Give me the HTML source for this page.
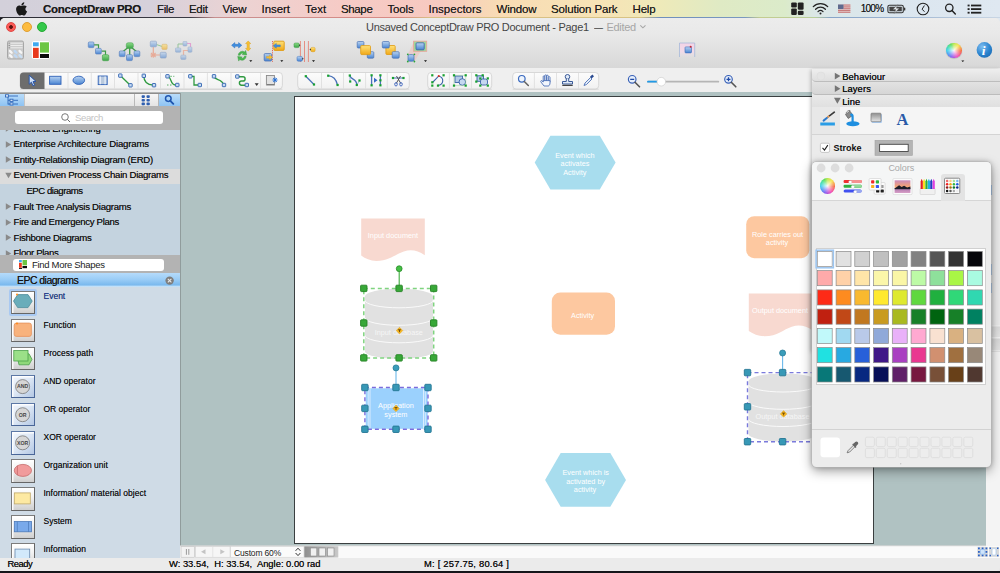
<!DOCTYPE html>
<html>
<head>
<meta charset="utf-8">
<title>ConceptDraw PRO</title>
<style>
*{box-sizing:border-box;margin:0;padding:0}
html,body{width:1000px;height:573px;overflow:hidden;background:#15151a}
body{font-family:"Liberation Sans",sans-serif;position:relative;color:#111}
.abs{position:absolute}
#menubar{position:absolute;left:0;top:0;width:1000px;height:23px;
 background:linear-gradient(90deg,#d3d0da 0,#d6d1db 150px,#ecd3d3 240px,#f6cbc6 340px,#f7c9c0 440px,#f8dcb4 500px,#f7e3b6 600px,#eeeab9 660px,#dfeac4 720px,#dbebca 785px,#dbe7e6 815px,#dbe6ef 900px,#dfe8f1 1000px);}
#mbline{position:absolute;left:0;top:17.300px;width:1000px;height:1.200px;background:linear-gradient(90deg,#2b2b33 0,#3a3a44 190px,#c98f8f 215px,#d98a84 400px,#d9bf86 430px,#d8c384 640px,#6f8fbd 660px,#7a98c0 745px,#c4cc90 760px,#b9cf9a 815px,#86a4c8 830px,#9cb4d0 900px,#c9d6e4 1000px)}
#menubar span{position:absolute;top:1px;font-size:11.5px;line-height:16px;color:#1a1a1a;white-space:nowrap;text-shadow:0 0 .35px rgba(0,0,0,.55)}
#win{position:absolute;left:0;top:18px;width:1000px;height:553px;background:#e6e6e6;border-radius:5px 5px 0 0;overflow:hidden}
#tb1{position:absolute;left:0;top:0;width:1000px;height:51px;background:linear-gradient(#ececec,#e9e9e9 30%,#d7d7d7)}
#tb1line{position:absolute;left:0;top:49.600px;width:1000px;height:.8px;background:#cbcbcb}
#tb2{position:absolute;left:0;top:50.400px;width:1000px;height:24px;background:#efefef}
#tb2line{position:absolute;left:0;top:73.800px;width:1000px;height:.7px;background:#b2b4b4}
.tl{position:absolute;top:4px;width:10px;height:10px;border-radius:50%}
#title{position:absolute;left:0;top:2px;width:1010px;text-align:center;font-size:11.6px;line-height:14px;color:#444;white-space:nowrap}
#title i{font-style:normal;color:#a3a3a3}
.grp{position:absolute;top:54px;height:17px;background:#f7f7f7;border:1px solid #d4d4d4;border-radius:3px;box-shadow:0 .5px 0 #c8c8c8}
.grp b{position:absolute;top:1px;width:1px;height:13px;background:#dedede}
#canvasbg{position:absolute;left:180px;top:74.400px;width:806px;height:453.600px;background:#b0c2c2}
#page{position:absolute;left:294px;top:78px;width:580px;height:448px;background:#fff;border:1px solid #3a3f40}
#left{position:absolute;left:0;top:75px;width:180px;height:465px;background:#d0dde8;overflow:hidden}
#status{position:absolute;left:0;top:540px;width:1000px;height:12.600px;background:#ebebeb;font-size:9.400px;border-radius:0 0 4px 4px}
#status span{position:absolute;top:-.5px;line-height:12px;text-shadow:0 0 .3px #333;white-space:nowrap;color:#111}
#hscroll{position:absolute;left:180px;top:528px;width:820px;height:12px}
</style>
</head>
<body>
<!-- MENUBAR -->
<div id="menubar">
<svg class="abs" style="left:16px;top:2px" width="12" height="14" viewBox="0 0 12 14"><path d="M8.3 0.2c.1.9-.3 1.700-.8 2.300-.5.600-1.300 1.000-2.100.900-.1-.8.300-1.700.800-2.200.5-.6 1.400-1 2.100-1zM10.800 4.700c-.9.500-1.400 1.300-1.400 2.400 0 1.200.7 2.100 1.700 2.500-.3.900-.8 1.800-1.400 2.600-.5.700-1.100 1.300-1.900 1.300-.8 0-1-.5-2-.5s-1.300.5-2 .5c-.8 0-1.400-.7-2-1.500C.6 10.300 0 8.300.1 6.800c.1-1.900 1.500-3.300 3.100-3.300.9 0 1.700.6 2.300.6.600 0 1.500-.7 2.700-.6 1.000.05 1.900.4 2.600 1.200z" fill="#1a1a1a"/></svg>
<span style="left:43px;font-weight:bold;letter-spacing:-.28px">ConceptDraw PRO</span>
<span style="left:157px;letter-spacing:-.37px">File</span>
<span style="left:189px;letter-spacing:-.3px">Edit</span>
<span style="left:222.5px;letter-spacing:-.22px">View</span>
<span style="left:261.5px;letter-spacing:-.06px">Insert</span>
<span style="left:305px;letter-spacing:.07px">Text</span>
<span style="left:341px;letter-spacing:-.37px">Shape</span>
<span style="left:387.5px;letter-spacing:-.16px">Tools</span>
<span style="left:428.5px">Inspectors</span>
<span style="left:496.5px;letter-spacing:-.18px">Window</span>
<span style="left:551px;letter-spacing:-.15px">Solution Park</span>
<span style="left:632.5px;letter-spacing:-.17px">Help</span>
<span style="left:860.700px;font-size:10px;letter-spacing:-.72px">100%</span>
<svg class="abs" style="left:780px;top:0" width="220" height="18" viewBox="780 0 220 18">
 <g fill="#222"><rect x="791.2" y="2.4" width="5.6" height="5" rx="1.2"/><rect x="797.8" y="2.4" width="5.8" height="7.4" rx="1.2"/><rect x="791.2" y="8.4" width="5.6" height="6.6" rx="1.2"/><rect x="797.8" y="10.8" width="5.8" height="4.2" rx="1.2"/></g>
 <g fill="none" stroke="#222" stroke-width="1.3" stroke-linecap="round"><path d="M813.3 6.6a10.300 10.300 0 0 1 14.400 0"/><path d="M815.600 9.200a7 7 0 0 1 9.800 0"/><path d="M818 11.600a3.600 3.600 0 0 1 5 0"/></g><circle cx="820.5" cy="13.500" r="1" fill="#222"/>
 <rect x="838" y="4.500" width="12.400" height="8.400" fill="#e3c4c4"/><rect x="838" y="4.500" width="5.600" height="4.600" fill="#5f6b8e"/><g stroke="#c47474" stroke-width=".9"><path d="M843.600 5h6.800M843.600 6.900h6.800M843.600 8.700h6.800M838 10.500h12.400M838 12.300h12.400"/></g>
 <rect x="887.900" y="5.200" width="15.400" height="7.600" rx="1.600" fill="none" stroke="#333" stroke-width="1.100"/><rect x="904" y="7.500" width="1.300" height="3" rx=".6" fill="#333"/><rect x="889.400" y="6.700" width="12.400" height="4.600" rx=".5" fill="#444"/><path d="M897.600 4.700l-4.800 4.900h2.900l-1.400 3.800 5-5.200h-2.900z" fill="#e9eff3" stroke="#444" stroke-width=".4"/>
 <circle cx="923" cy="9" r="5.800" fill="none" stroke="#222" stroke-width="1.100"/><path d="M924.400 5.500l-2.300 3.700 2.400 2.500" fill="none" stroke="#222" stroke-width="1"/>
 <circle cx="949.300" cy="7.800" r="3.700" fill="none" stroke="#222" stroke-width="1.300"/><path d="M952 10.600l3.300 3.400" stroke="#222" stroke-width="1.500" stroke-linecap="round"/>
 <g fill="#222"><rect x="967.600" y="4.600" width="2" height="1.800"/><rect x="971" y="4.600" width="10.300" height="1.800"/><rect x="967.600" y="8.200" width="2" height="1.800"/><rect x="971" y="8.200" width="10.300" height="1.800"/><rect x="967.600" y="11.800" width="2" height="1.800"/><rect x="971" y="11.800" width="10.300" height="1.800"/></g>
</svg>
</div>
<div id="mbline"></div>
<div class="abs" style="left:0;top:18px;width:5px;height:5px;background:#1a1a20"></div>
<!-- WINDOW -->
<div id="win">
 <div id="tb1"></div><div id="tb1line"></div>
 <div id="tb2"></div><div id="tb2line"></div>
 <div class="tl" style="left:6px;background:radial-gradient(circle,#5a1210 0,#5a1210 1.500px,#fc5b57 2.200px);border:.5px solid #df4744"></div>
 <div class="tl" style="left:22px;background:#fdbc40;border:.5px solid #de9f34"></div>
 <div class="tl" style="left:37px;background:#34c84a;border:.5px solid #27aa35"></div>
 <div class="abs" style="left:366px;top:2px;font-size:11px;line-height:14px;color:#454545;white-space:nowrap;letter-spacing:-.3px">Unsaved ConceptDraw PRO Document - Page1</div>
 <div class="abs" style="left:593.5px;top:2px;font-size:11px;line-height:14px;color:#454545;white-space:nowrap;transform:scaleX(.82);transform-origin:left">—</div>
 <div class="abs" style="left:606.5px;top:2px;font-size:11px;line-height:14px;color:#a6a6a6;white-space:nowrap;letter-spacing:-.3px">Edited</div>
 <svg class="abs" style="left:0;top:0" width="1000" height="75" viewBox="0 18 1000 75">
 <defs>
  <linearGradient id="gb" x1="0" y1="0" x2="0" y2="1"><stop offset="0" stop-color="#b9d3f1"/><stop offset="1" stop-color="#4a85d2"/></linearGradient>
  <linearGradient id="gg" x1="0" y1="0" x2="0" y2="1"><stop offset="0" stop-color="#8fdc8a"/><stop offset="1" stop-color="#3aa545"/></linearGradient>
  <linearGradient id="gy" x1="0" y1="0" x2="0" y2="1"><stop offset="0" stop-color="#ffe27a"/><stop offset="1" stop-color="#f0a818"/></linearGradient>
  <linearGradient id="gbtn" x1="0" y1="0" x2="0" y2="1"><stop offset="0" stop-color="#fbfbfb"/><stop offset="1" stop-color="#efefef"/></linearGradient>
  <radialGradient id="ginfo" cx=".35" cy=".3" r=".8"><stop offset="0" stop-color="#7fbdf0"/><stop offset=".6" stop-color="#2d86d0"/><stop offset="1" stop-color="#1d6cb5"/></radialGradient>
 </defs>
 <path d="M640.300 25.300l2.600 2.500 2.600-2.500" fill="none" stroke="#a6a6a6" stroke-width="1.100"/>
 <!-- row1 icon1 -->
 <rect x="7.500" y="41" width="16" height="18" rx="1.500" fill="#cbcbcb" stroke="#a2a2a2" stroke-width=".9"/>
 <path d="M10.600 43.200h12M10.600 45.500h12M10.600 47.800h12" stroke="#ededed" stroke-width="1"/><path d="M8.600 43.200h1.300M8.600 45.500h1.300M8.600 47.800h1.300" stroke="#8e8e8e" stroke-width="1"/>
 <g><ellipse cx="10.800" cy="51.800" rx="2.500" ry="1.300" transform="rotate(45 10.800 51.800)" fill="#f6f6f6"/><ellipse cx="15.600" cy="51.800" rx="2.500" ry="1.300" transform="rotate(45 15.600 51.800)" fill="#bdd7f3"/><ellipse cx="20.400" cy="51.800" rx="2.500" ry="1.300" transform="rotate(45 20.400 51.800)" fill="#f6f6f6"/><ellipse cx="10.800" cy="56.200" rx="2.500" ry="1.300" transform="rotate(45 10.800 56.200)" fill="#f6f6f6"/><ellipse cx="15.600" cy="56.200" rx="2.500" ry="1.300" transform="rotate(45 15.600 56.200)" fill="#bdd7f3"/><ellipse cx="20.400" cy="56.200" rx="2.500" ry="1.300" transform="rotate(45 20.400 56.200)" fill="#c9dff5"/></g>
 <!-- icon2 -->
 <rect x="31.800" y="41" width="18" height="18" rx="2.500" fill="#fff"/>
 <rect x="33" y="42.300" width="5.700" height="4" fill="#3fa9f0"/><rect x="33" y="47.800" width="5.700" height="10.200" fill="#e8391c"/><rect x="40" y="42.300" width="9" height="10.300" fill="#6cc644"/><rect x="40" y="54" width="9" height="4" fill="#0b0b0b"/>
 <!-- icon3 -->
 <path d="M94 44.800h4.500v4M101.500 51.200h4v4" fill="none" stroke="#3f9a48" stroke-width="1.200"/>
 <rect x="88.300" y="42" width="5.600" height="5.600" rx="1" fill="url(#gb)" stroke="#5b82bd" stroke-width=".7"/>
 <rect x="95.500" y="48.400" width="5.800" height="5.600" rx="1" fill="url(#gb)" stroke="#5b82bd" stroke-width=".7"/>
 <rect x="102.400" y="54.700" width="6.400" height="6" rx="1.300" fill="url(#gg)" stroke="#4aa552" stroke-width=".7"/>
 <!-- icon4 -->
 <path d="M129.700 48v7M128 47.500l-5.500 4.500M131.500 47.500l5.500 4.500" stroke="#3f9a48" stroke-width="1.300" fill="none"/>
 <rect x="126.300" y="42.800" width="7" height="5.600" rx="1.800" fill="url(#gg)" stroke="#4aa552" stroke-width=".6"/>
 <rect x="119.300" y="51" width="5.700" height="5.600" rx="1" fill="url(#gb)" stroke="#5b82bd" stroke-width=".7"/>
 <rect x="126.500" y="54.700" width="5.900" height="5.900" rx="1" fill="url(#gb)" stroke="#5b82bd" stroke-width=".7"/>
 <rect x="134.100" y="51" width="5.700" height="5.600" rx="1" fill="url(#gb)" stroke="#5b82bd" stroke-width=".7"/>
 <!-- icon5 faded -->
 <g opacity=".6">
 <path d="M156.500 44.500l5.500 2" stroke="#5cb860" stroke-width="1"/><path d="M153.300 47v6M155 55h5" stroke="#ee8a6a" stroke-width="1.200"/>
 <path d="M151 53l4.600 4M155.600 53l-4.600 4M153.300 52.200v5.600M150.500 55h5.600" stroke="#ee8a6a" stroke-width="1.100"/>
 <rect x="150.300" y="41.200" width="6.200" height="5.600" rx="1" fill="url(#gb)" stroke="#5b82bd" stroke-width=".7"/>
 <rect x="161.900" y="44.300" width="5.200" height="5.100" rx="1" fill="url(#gy)" stroke="#d9a53a" stroke-width=".7"/>
 <rect x="160.300" y="52.300" width="5.900" height="5.700" rx="1" fill="url(#gb)" stroke="#5b82bd" stroke-width=".7"/>
 </g>
 <!-- icon6 faded -->
 <g opacity=".5">
 <path d="M178 48v-4h5" fill="none" stroke="#4aa552" stroke-width="1"/><path d="M187 43.500h3.500v3.500" fill="none" stroke="#e060c0" stroke-width="1.100"/><path d="M188 50.500h-4.500v4.500" fill="none" stroke="#ee8a6a" stroke-width="1.200"/>
 <rect x="183" y="41.400" width="3.900" height="4.600" rx=".8" fill="url(#gb)" stroke="#5b82bd" stroke-width=".6"/>
 <rect x="175.400" y="48" width="5.400" height="4.200" rx=".8" fill="url(#gb)" stroke="#5b82bd" stroke-width=".6"/>
 <rect x="188" y="47" width="3.900" height="5.200" rx=".8" fill="url(#gb)" stroke="#5b82bd" stroke-width=".6"/>
 <rect x="180.800" y="55.200" width="5.100" height="4.200" rx=".8" fill="url(#gb)" stroke="#5b82bd" stroke-width=".6"/>
 </g>
 <!-- icon7 -->
 <path d="M231.600 45.300l3.200-2.700v1.700h3.800v-1.700l3.200 2.700-3.200 2.700v-1.700h-3.800v1.700z" fill="#3f8ee0" stroke="#2a6fc0" stroke-width=".5"/>
 <path d="M248.200 41l2.600 2.600h-1.500v4.800h1.500l-2.600 2.600-2.600-2.600h1.500v-4.800h-1.500z" fill="#f8c030" stroke="#d9a020" stroke-width=".5"/>
 <path d="M238.200 55.200a4.200 4.200 0 0 1 6.500-3.300l1-1.500 1 4.600-4.500-.4 1.100-1.200a2.300 2.300 0 0 0-3.200 1.800z" fill="#4ab850" stroke="#2f9238" stroke-width=".4"/>
 <path d="M246.200 56.300a4.200 4.200 0 0 1-6.500 3.300l-1 1.500-1-4.600 4.500.4-1.100 1.200a2.300 2.300 0 0 0 3.200-1.800z" fill="#4ab850" stroke="#2f9238" stroke-width=".4"/>
 <path d="M249.300 60.200h3l-1.500 1.700z" fill="#111"/>
 <!-- icon8 -->
 <rect x="273.800" y="41.200" width="10.400" height="9.200" rx="1" fill="url(#gy)" stroke="#e09a10" stroke-width=".9"/>
 <path d="M273.300 45.800l3-2.400v1.500h4v1.800h-4v1.500z" fill="#3f8ee0" stroke="#2a6fc0" stroke-width=".4"/>
 <path d="M272.500 41v21" stroke="#e04a3a" stroke-width=".8" stroke-dasharray="1 .8"/>
 <rect x="264.200" y="53.600" width="7.400" height="7.400" rx="1" fill="url(#gb)" stroke="#4a72b5" stroke-width=".8"/>
 <path d="M272.500 57.300l-3 2.400v-1.500h-3v-1.800h3v-1.500z" fill="#f8c030" stroke="#d9a020" stroke-width=".4"/>
 <path d="M280.300 60.200h3l-1.500 1.700z" fill="#111"/>
 <!-- icon9 -->
 <path d="M300.400 41v21M304.500 41v21M308.400 41v21" stroke="#e66a5a" stroke-width=".7"/>
 <rect x="294" y="43" width="5.200" height="4.600" rx="1.300" fill="url(#gg)" stroke="#3f9a48" stroke-width=".5"/><path d="M299.200 44.300l1.200 1-1.200 1z" fill="#222"/>
 <rect x="310.800" y="47.400" width="4.300" height="4.300" rx="1.200" fill="url(#gy)" stroke="#d9a020" stroke-width=".5"/><path d="M310.800 48.500l-1.300 1 1.300 1z" fill="#222"/>
 <rect x="297" y="56.400" width="5.400" height="4.800" rx="1.300" fill="url(#gb)" stroke="#3a72c0" stroke-width=".5"/><path d="M302.400 57.800l1.300 1-1.300 1z" fill="#222"/>
 <path d="M312 60.200h3l-1.500 1.700z" fill="#111"/>
 <!-- icon10 -->
 <rect x="357.200" y="41.500" width="6.700" height="6.500" rx="1" fill="url(#gb)" stroke="#4a72b5" stroke-width=".7"/>
 <rect x="367.300" y="51.700" width="6.500" height="6.500" rx="1" fill="url(#gb)" stroke="#4a72b5" stroke-width=".7"/>
 <rect x="360.700" y="45.600" width="9.800" height="9" rx="1" fill="url(#gy)" stroke="#e09a10" stroke-width=".8"/>
 <!-- icon11 -->
 <rect x="385.900" y="45.500" width="9.300" height="9" rx="1" fill="url(#gy)" stroke="#e09a10" stroke-width=".8"/>
 <rect x="382.300" y="41.500" width="7" height="6.500" rx="1" fill="url(#gb)" stroke="#4a72b5" stroke-width=".7"/>
 <rect x="392.200" y="51.700" width="7" height="6.500" rx="1" fill="url(#gb)" stroke="#4a72b5" stroke-width=".7"/>
 <!-- icon12 -->
 <path d="M408 54l6-12.500h12.500l-12 20z" fill="#f0c0b8" opacity=".55"/>
 <rect x="413.600" y="41.200" width="13.100" height="10.100" fill="#9fd89a" stroke="#e8a79c" stroke-width=".9"/>
 <rect x="416" y="42.800" width="8.200" height="7" rx="1" fill="url(#gb)" stroke="#3a62a5" stroke-width=".8"/>
 <rect x="408" y="54.600" width="6" height="6.600" rx="1.500" fill="url(#gb)" stroke="#4a72b5" stroke-width=".7"/>
 <g fill="#2aa53a"><circle cx="407.800" cy="54.300" r=".9"/><circle cx="414.400" cy="54.300" r=".9"/><circle cx="407.800" cy="61.500" r=".9"/><circle cx="414.400" cy="61.500" r=".9"/></g>
 <path d="M424 60.200h3l-1.500 1.700z" fill="#111"/>
 <!-- icon13 -->
 <defs><linearGradient id="gfade" x1="0" y1="0" x2="0" y2="1"><stop offset="0" stop-color="#f3d3e6"/><stop offset=".6" stop-color="#f1dbe8"/><stop offset="1" stop-color="#e4e0e2" stop-opacity="0"/></linearGradient></defs>
 <rect x="679.500" y="43" width="15.200" height="15" fill="url(#gfade)"/>
 <path d="M679.500 57v-14h15.200v14" fill="none" stroke="#9fb5d8" stroke-width=".9" opacity=".8"/>
 <rect x="685" y="46.900" width="6.500" height="6" rx=".8" fill="url(#gb)" stroke="#3a6ab8" stroke-width=".6"/><circle cx="690.700" cy="46.800" r="1" fill="#c0283a"/>
 <!-- color wheel -->
 <path d="M961.300 60.400h3l-1.500 1.700z" fill="#111"/>
 <circle cx="984.400" cy="49.900" r="7.800" fill="url(#ginfo)"/>
 <text x="981.800" y="54.800" font-family="Liberation Serif,serif" font-style="italic" font-weight="bold" font-size="13.500" fill="#fff">i</text>
 </svg>
 <div class="abs" style="left:946.2px;top:24.8px;width:15.600px;height:15.600px;border-radius:50%;background:radial-gradient(circle,rgba(255,255,255,.95) 0,rgba(255,255,255,.35) 45%,rgba(255,255,255,0) 75%),conic-gradient(from 0deg,#b4e43a,#f6e23c 40deg,#f65a32 95deg,#f03cb4 150deg,#7a4cf0 200deg,#3a8cf2 235deg,#2ecbe8 270deg,#2edc9a 305deg,#4fd944 335deg,#b4e43a);box-shadow:0 .5px 1px rgba(0,0,0,.25)"></div>
 <!--TB1END-->
 <svg class="abs" style="left:0;top:51px" width="1000" height="24" viewBox="0 69 1000 24">
 <defs>
  <linearGradient id="gbtn2" x1="0" y1="0" x2="0" y2="1"><stop offset="0" stop-color="#fcfcfc"/><stop offset="1" stop-color="#f1f1f1"/></linearGradient>
  <g id="hq"><rect x="-1.700" y="-1.700" width="3.400" height="3.400" rx=".5" fill="#c9dcf3" stroke="#2f62b0" stroke-width=".9"/></g>
  <g id="gd"><rect x="-1.100" y="-1.100" width="2.200" height="2.200" fill="#18a030"/></g>
 </defs>
 <!-- groups -->
 <g fill="url(#gbtn2)" stroke="#d0d0d0" stroke-width=".8">
  <rect x="20" y="72.500" width="262.400" height="16.600" rx="3.500"/>
  <rect x="297.700" y="72.500" width="111.600" height="16.600" rx="3.500"/>
  <rect x="427.700" y="72.500" width="64" height="16.600" rx="3.500"/>
  <rect x="512.700" y="72.500" width="86" height="16.600" rx="3.500"/>
 </g>
 <path d="M20 89.300h262.400M297.700 89.300h111.600M427.700 89.300h64M512.700 89.300h86" stroke="#c9c9c9" stroke-width=".6"/>
 <path d="M23.500 72.500h21v16.600h-21a3.500 3.500 0 0 1-3.500-3.500v-9.600a3.500 3.500 0 0 1 3.500-3.500z" fill="#6d6d6d"/>
 <g stroke="#dcdcdc" stroke-width=".8">
  <path d="M68 73v15.600M91.300 73v15.600M114.500 73v15.600M138 73v15.600M160.500 73v15.600M184 73v15.600M207.400 73v15.600M231 73v15.600M260.600 73v15.600"/>
  <path d="M321.500 73v15.600M343.500 73v15.600M365.600 73v15.600M387.300 73v15.600"/>
  <path d="M449.400 73v15.600M471.500 73v15.600"/>
  <path d="M534.400 73v15.600M556.500 73v15.600M578.500 73v15.600"/>
 </g>
 <!-- arrow -->
 <path d="M29.200 75.200l0 9 2.200-2 1.600 3.600 1.600-.7-1.600-3.500 3-.2z" fill="#cfe0f8" stroke="#1f4fa8" stroke-width=".9" stroke-linejoin="round"/>
 <!-- rect -->
 <rect x="49.600" y="76.300" width="11.400" height="8" fill="url(#gb)" stroke="#2f62b8" stroke-width=".9"/>
 <ellipse cx="78.800" cy="80.300" rx="5.800" ry="4.100" fill="url(#gb)" stroke="#2f62b8" stroke-width=".9"/>
 <rect x="98.200" y="76" width="9" height="8.600" fill="#b9c9dd" stroke="#2f62b8" stroke-width=".9"/><path d="M100.300 76.400v7.800M105.100 76.400v7.800" stroke="#e6eefa" stroke-width="1.300"/>
 <!-- connectors -->
 <path d="M120.500 75.800l9.500 9.200" stroke="#2f9a40" stroke-width="1.300"/><use href="#hq" x="120.300" y="75.600"/><use href="#hq" x="130.500" y="85.300"/>
 <path d="M143.800 75.800c0 6 3 9 9.500 9.300" fill="none" stroke="#2f9a40" stroke-width="1.300"/><use href="#hq" x="143.800" y="75.800"/><use href="#hq" x="154" y="85.200"/>
 <path d="M167.300 76.300c4.500 0 2.500 8.700 8 8.700" fill="none" stroke="#2f9a40" stroke-width="1.300"/><path d="M167.300 76.300h7M167 85h6" stroke="#2f9a40" stroke-width=".8" stroke-dasharray="1.500 1.500"/><use href="#hq" x="167.500" y="76.300"/><use href="#hq" x="177.300" y="85"/>
 <path d="M190.300 76.300h3.700v8.700h4" fill="none" stroke="#2f9a40" stroke-width="1.300"/><use href="#hq" x="190.300" y="76.300"/><use href="#hq" x="199.800" y="85"/>
 <path d="M214 76.500c1 4 8 2 9.500 8" fill="none" stroke="#2f9a40" stroke-width="1.300"/><use href="#hq" x="214" y="76.300"/><use href="#hq" x="224" y="85"/>
 <path d="M237.500 76.800h5.500a2 2 0 0 1 0 4.200h-1.500a2 2 0 0 0 0 4.200h5" fill="none" stroke="#2f9a40" stroke-width="1.400"/><use href="#hq" x="237.300" y="76.500"/><use href="#hq" x="246.800" y="85"/>
 <path d="M254.700 83.200h4l-2 2.800z" fill="#333"/>
 <rect x="266.400" y="75.500" width="8" height="9.500" fill="#e2e2e2" stroke="#8a8a8a" stroke-width=".9"/><path d="M267 84.600h7.400" stroke="#777" stroke-width="1"/>
 <path d="M272.500 80h5M275 77.500v5M273.200 78.200l3.600 3.600M276.800 78.200l-3.600 3.600" stroke="#2a72d8" stroke-width="1"/>
 <!-- group2 -->
 <path d="M305.800 76.200l8.200 8.300" stroke="#4a72b8" stroke-width="1.300"/><use href="#gd" x="305.800" y="76.200"/><use href="#gd" x="314" y="84.500"/>
 <path d="M328.200 75.700c5 .5 8 3.500 9.300 9.300" fill="none" stroke="#4a72b8" stroke-width="1.300"/><use href="#gd" x="328.200" y="75.700"/><use href="#gd" x="337.600" y="85"/>
 <path d="M349.800 75.500c1 4.500 7 3 7 9.500" fill="none" stroke="#4a72b8" stroke-width="1.300"/><path d="M349.800 75.500l.4 6M356.800 85l2.700-4.500" stroke="#7a9ad0" stroke-width=".7"/><use href="#gd" x="349.800" y="75.500"/><use href="#gd" x="350.200" y="81.500"/><use href="#gd" x="356.800" y="85"/><use href="#gd" x="359.500" y="80.500"/>
 <path d="M371.600 75.300v10M380.400 75.300v10" stroke="#4a72b8" stroke-width="1.300"/><path d="M374 77.800l3.500 2.500-3.500 2.500z" fill="#3a6ac8"/><use href="#gd" x="371.600" y="75.300"/><use href="#gd" x="371.600" y="85.300"/><use href="#gd" x="380.400" y="75.300"/><use href="#gd" x="380.400" y="80.300"/><use href="#gd" x="380.400" y="85.300"/>
 <path d="M393 78h10.500" stroke="#4a72b8" stroke-width="1.200"/><path d="M396.500 76l4.300 7.500M400.500 76l-4.300 7.500" stroke="#444" stroke-width=".9"/><ellipse cx="396" cy="84.300" rx="1.300" ry="1.700" fill="none" stroke="#3a62c0" stroke-width=".9"/><ellipse cx="401" cy="84.300" rx="1.300" ry="1.700" fill="none" stroke="#3a62c0" stroke-width=".9"/><use href="#gd" x="393" y="78"/><use href="#gd" x="403.500" y="78"/>
 <!-- group3 -->
 <path d="M432.500 82.500l6-6.300a4.200 4.200 0 1 1-.5 9" fill="none" stroke="#3a62a8" stroke-width="1.100"/><circle cx="438.800" cy="76" r="1.100" fill="#d83020"/><use href="#gd" x="432.300" y="75.300"/><use href="#gd" x="443.600" y="75.300"/><use href="#gd" x="432.300" y="85.600"/><use href="#gd" x="443.600" y="85.600"/><use href="#gd" x="432.300" y="82.300"/><use href="#gd" x="438" y="85.600"/>
 <rect x="455" y="76" width="7.500" height="6.500" fill="#b5cbe8" stroke="#3a62a8" stroke-width=".9"/><circle cx="462.300" cy="82" r="3.300" fill="#c5d8f0" stroke="#3a62a8" stroke-width=".9"/><path d="M454 75.300h11.700v10.300h-11.700z" fill="none" stroke="#9ad09a" stroke-width=".5"/><use href="#gd" x="454" y="75.300"/><use href="#gd" x="465.700" y="75.300"/><use href="#gd" x="454" y="85.600"/><use href="#gd" x="465.700" y="85.600"/>
 <rect x="477" y="75.800" width="6.500" height="5.500" fill="#b5cbe8" stroke="#3a62a8" stroke-width=".9"/><rect x="480.500" y="79" width="7" height="6" rx="2" fill="#c5d8f0" stroke="#3a62a8" stroke-width=".9"/><use href="#gd" x="476.300" y="75.300"/><use href="#gd" x="482.700" y="75.300"/><use href="#gd" x="476.300" y="81.600"/><use href="#gd" x="487.800" y="78.400"/><use href="#gd" x="480.300" y="85.600"/><use href="#gd" x="487.800" y="85.600"/><use href="#gd" x="480.300" y="78.500"/>
 <!-- group4 -->
 <circle cx="521.800" cy="78.800" r="3.300" fill="#eef4fc" stroke="#3a6ac0" stroke-width="1.200"/><path d="M524.300 81.500l4 4" stroke="#666" stroke-width="1.600" stroke-linecap="round"/>
 <g fill="#f3f7fd" stroke="#3a62b0" stroke-width=".8" stroke-linejoin="round"><rect x="543.200" y="75.800" width="1.700" height="6" rx=".85"/><rect x="544.900" y="74.800" width="1.700" height="6.500" rx=".85"/><rect x="546.600" y="75.200" width="1.700" height="6.500" rx=".85"/><rect x="548.300" y="76.600" width="1.700" height="6" rx=".85"/><path d="M543.200 80.600h6.800v2.400c0 1.500-.8 2.800-1.600 3h-4.400l-3.200-4.200c-.5-.8.600-1.600 1.300-.9l1.100 1.200z"/></g>
 <circle cx="567.500" cy="76.800" r="2.300" fill="#dfe9f7" stroke="#3a5a98" stroke-width="1"/><path d="M566.300 79v2.500h-3.800v2.500h10v-2.500h-3.800v-2.500" fill="#dfe9f7" stroke="#3a5a98" stroke-width="1"/><path d="M562.300 85.300h10.400" stroke="#444" stroke-width="1.200"/>
 <path d="M584 85.500l1-2.500 5.500-5.500 1.500 1.500-5.500 5.500z" fill="#e3ecf8" stroke="#3a62b0" stroke-width=".8"/><path d="M590 76.800l2.300-2.300 1.700 1.700-2.300 2.300z" fill="#2a4a90"/>
 <!-- zoom out/in -->
 <circle cx="632.200" cy="79.300" r="3.800" fill="#e8f0fb" stroke="#3a62b8" stroke-width="1.200"/><path d="M630.200 79.300h4" stroke="#1f4aa8" stroke-width="1.300"/><path d="M635 82.300l4.500 4.500" stroke="#555" stroke-width="1.600" stroke-linecap="round"/>
 <path d="M648 81.700h70.300" stroke="#b5b5b5" stroke-width="1.800" stroke-linecap="round"/><path d="M648 81.700h11" stroke="#1f9ae8" stroke-width="1.800" stroke-linecap="round"/>
 <circle cx="661.300" cy="81.700" r="4.300" fill="#fff" stroke="#c9c9c9" stroke-width=".6"/>
 <circle cx="728.500" cy="79.300" r="3.800" fill="#e8f0fb" stroke="#3a62b8" stroke-width="1.200"/><path d="M726.500 79.300h4M728.500 77.300v4" stroke="#1f4aa8" stroke-width="1.300"/><path d="M731.300 82.300l4.500 4.500" stroke="#555" stroke-width="1.600" stroke-linecap="round"/>
 </svg>
 <!--TB2END-->
 <div id="canvasbg"></div><div class="abs" style="left:180px;top:75px;width:1px;height:453px;background:#909c9c"></div>
 <div id="page"></div>
 <svg class="abs" style="left:180px;top:75px" width="820" height="453" viewBox="180 93 820 453" font-family="Liberation Sans,sans-serif" font-size="7.300" fill="#fff" text-anchor="middle">
 <defs>
  <g id="hg"><rect x="-3.200" y="-3.200" width="6.400" height="6.400" rx=".8" fill="#38a838" stroke="#258225" stroke-width=".9"/></g>
  <g id="hb"><rect x="-3.200" y="-3.200" width="6.400" height="6.400" rx=".8" fill="#3798b6" stroke="#257693" stroke-width=".9"/></g>
  <g id="dm"><path d="M0-3.300l3.300 3.300-3.300 3.300-3.300-3.300z" fill="#f7b722" stroke="#d99a10" stroke-width=".4"/><path d="M-1.500-.8h3M0-.8v2.300" stroke="#5a3a00" stroke-width=".8"/></g>
 </defs>
 <!-- hexagon top -->
 <path d="M534.700 162.600l15.700-26.800h49.400l15.800 26.800-15.800 26.900h-49.400z" fill="#a8ddee"/>
 <text x="574.800" y="157.700">Event which</text><text x="575" y="166.300">activates</text><text x="574.800" y="174.800">Activity</text>
 <!-- input document -->
 <path d="M361.200 218.400h63.600v36.800c-7-4.500-13-6.300-21-3.800-8.500 2.700-14 9.500-27.500 9.500-6 0-11-2.200-15.100-5.300z" fill="#f8d9d0"/>
 <text x="393" y="238.400">Input document</text>
 <!-- role -->
 <rect x="746.200" y="216.200" width="63.100" height="42" rx="8" fill="#fdc8a0"/>
 <text x="777.600" y="236.600">Role carries out</text><text x="777" y="245">activity</text>
 <!-- activity -->
 <rect x="551.800" y="292.600" width="63.200" height="42.200" rx="8.500" fill="#fdc8a0"/>
 <text x="582.600" y="317.500">Activity</text>
 <!-- output document -->
 <path d="M748.800 293.500h64v37c-7-4.500-13-6.300-21-3.800-8.500 2.700-14 9.500-27.500 9.500-6 0-11-2.200-15.500-5.300z" fill="#f8d9d0"/>
 <text x="780" y="313">Output document</text>
 <!-- input database -->
 <g>
  <path d="M365 296.300a34 7.500 0 0 1 68 0v55a34 7.500 0 0 1-68 0z" fill="#e1e1e1"/>
  <g fill="none" stroke="#fafafa" stroke-width="1"><path d="M365 300.300a34 7.500 0 0 0 68 0"/><path d="M365 317.800a34 7.500 0 0 0 68 0"/><path d="M365 335.300a34 7.500 0 0 0 68 0"/></g>
  <text x="398.800" y="334.900" fill="#f6f6f6">Input database</text>
  <rect x="363.800" y="288.400" width="69.900" height="69.500" fill="none" stroke="#80d480" stroke-width="1.500" stroke-dasharray="4 3"/>
  <path d="M399.200 268.700v19.700" stroke="#3dae3d" stroke-width="1.100"/><circle cx="399.200" cy="268.700" r="2.900" fill="#45c045" stroke="#2a8a2a" stroke-width=".8"/>
  <use href="#hg" x="363.800" y="288.400"/><use href="#hg" x="399.100" y="288.400"/><use href="#hg" x="433.700" y="288.400"/>
  <use href="#hg" x="363.800" y="323"/><use href="#hg" x="433.700" y="323"/>
  <use href="#hg" x="363.800" y="357.900"/><use href="#hg" x="399.100" y="357.900"/><use href="#hg" x="433.700" y="357.900"/>
  <use href="#dm" x="399.500" y="330.600"/>
 </g>
 <!-- application system -->
 <g>
  <rect x="365.700" y="388.300" width="62" height="40.500" fill="#9bd1fd"/>
  <path d="M368.200 388.300v40.500M370 388.300v40.500M423.500 388.300v40.500M425.300 388.300v40.500" stroke="#e8f4fe" stroke-width=".8"/>
  <text x="395.900" y="408.400">Application</text><text x="395.900" y="416.700">system</text>
  <rect x="364.900" y="387.500" width="63.100" height="41.800" fill="none" stroke="#7a6cdc" stroke-width="1.400" stroke-dasharray="4 3"/>
  <path d="M396 367.900v19.600" stroke="#6ab8ea" stroke-width="1.100"/><circle cx="396" cy="367.900" r="3" fill="#3a9dbb" stroke="#2a7c98" stroke-width=".8"/>
  <use href="#hb" x="364.900" y="387.500"/><use href="#hb" x="396" y="387.500"/><use href="#hb" x="428" y="387.500"/>
  <use href="#hb" x="364.900" y="408.400"/><use href="#hb" x="428" y="408.400"/>
  <use href="#hb" x="364.900" y="429.300"/><use href="#hb" x="396" y="429.300"/><use href="#hb" x="428" y="429.300"/>
  <use href="#dm" x="396" y="408.400"/>
 </g>
 <!-- output database -->
 <g>
  <path d="M748.500 381a34.500 7.500 0 0 1 69 0v53a34.500 7.500 0 0 1-69 0z" fill="#e1e1e1"/>
  <g fill="none" stroke="#fafafa" stroke-width="1"><path d="M748.500 384.500a34.500 7.500 0 0 0 69 0"/><path d="M748.500 401.800a34.500 7.500 0 0 0 69 0"/><path d="M748.500 419a34.500 7.500 0 0 0 69 0"/></g>
  <text x="782.500" y="418.700" fill="#f6f6f6">Output database</text>
  <rect x="747.500" y="372.600" width="70.200" height="69.100" fill="none" stroke="#7a7adc" stroke-width="1.400" stroke-dasharray="4 3"/>
  <path d="M782.600 353v19.600" stroke="#6ab8ea" stroke-width="1.100"/><circle cx="782.600" cy="353" r="3" fill="#3a9dbb" stroke="#2a7c98" stroke-width=".8"/>
  <use href="#hb" x="747.500" y="372.600"/><use href="#hb" x="782.600" y="372.600"/>
  <use href="#hb" x="747.500" y="406.800"/>
  <use href="#hb" x="747.500" y="441.700"/><use href="#hb" x="782.600" y="441.700"/>
  <use href="#dm" x="783.600" y="413.900"/>
 </g>
 <!-- hexagon bottom -->
 <path d="M545.100 479.900l15.600-26.900h49.600l15.700 26.900-15.700 26.800h-49.600z" fill="#a8ddee"/>
 <text x="585.700" y="474.900">Event which is</text><text x="585.700" y="483.600">activated by</text><text x="585" y="491.900">activity</text>
 </svg>
 <!--SHAPESEND-->
 <div id="left">
<div class="abs" style="left:0;top:0;width:180px;height:13px;background:linear-gradient(#f6f6f6,#e4e4e4);border-top:1px solid #8d8d8d"></div>
<div class="abs" style="left:0;top:1px;width:23.500px;height:12px;background:linear-gradient(#b9dcfa,#8ec3f3)"></div>
<div class="abs" style="left:158px;top:1px;width:22px;height:12px;background:linear-gradient(#b9dcfa,#8ec3f3)"></div>
<div class="abs" style="left:134px;top:1px;width:1px;height:12px;background:#b9b9b9"></div><div class="abs" style="left:23.500px;top:1px;width:1px;height:12px;background:#c5c5c5"></div><div class="abs" style="left:157.500px;top:1px;width:1px;height:12px;background:#b5b5b5"></div>
<svg class="abs" style="left:0;top:0" width="180" height="13" viewBox="0 93 180 13">
<g stroke="#2f66b8" stroke-width=".9" fill="none"><rect x="5.500" y="94.800" width="3" height="2.200" fill="#fff"/><path d="M9 96h9M8 97v7.500M8 100.300h2M8 104h2"/><rect x="10" y="99.200" width="3" height="2.200" fill="#dbe9fa"/><rect x="10" y="102.800" width="3" height="2.200" fill="#dbe9fa"/><path d="M13.500 100.300h4.500M13.500 104h4.500"/></g>
<g fill="#2f5fb0"><rect x="141.600" y="95.300" width="3.300" height="2.600" rx=".8"/><rect x="146.500" y="95.300" width="3.300" height="2.600" rx=".8"/><rect x="141.600" y="99" width="3.300" height="2.600" rx=".8"/><rect x="146.500" y="99" width="3.300" height="2.600" rx=".8"/><rect x="141.600" y="102.600" width="3.300" height="2.600" rx=".8"/><rect x="146.500" y="102.600" width="3.300" height="2.600" rx=".8"/></g>
<circle cx="168.300" cy="98.600" r="2.800" fill="none" stroke="#1f56b0" stroke-width="1.500"/><path d="M170.300 100.800l3 3" stroke="#1f56b0" stroke-width="1.900" stroke-linecap="round"/>
</svg>
<div class="abs" style="left:0;top:12.600px;width:180px;height:24px;background:#b3b3b3"></div>
<div class="abs" style="left:15px;top:18px;width:147.500px;height:13.400px;background:#fff;border-radius:3px"></div>
<svg class="abs" style="left:60px;top:19px" width="12" height="12" viewBox="0 0 12 12"><circle cx="5" cy="5" r="3.300" fill="none" stroke="#6a6a6a" stroke-width=".9"/><path d="M7.400 7.400l2.600 2.600" stroke="#6a6a6a" stroke-width="1"/></svg>
<div class="abs" style="left:75px;top:18.800px;font-size:9.600px;line-height:12px;color:#c4c4c4;letter-spacing:-.4px">Search</div>
<div class="abs" style="left:0;top:36.500px;width:180px;height:126px;background:#c4d3df;overflow:hidden">
<div class="abs" style="left:0;top:39.9px;width:180px;height:14.800px;background:#dcdcdc"></div>
<div class="abs" style="left:13.6px;top:-7.0px;font-size:9.600px;line-height:12px;letter-spacing:-0.27px;white-space:nowrap;color:#111;text-shadow:0 0 .2px #555">Electrical Engineering</div>
<svg class="abs" style="left:4.500px;top:-4.6px" width="7" height="7" viewBox="0 0 7 7"><path d="M.8.300l5.400 3.200-5.400 3.200z" fill="#8a8a8a"/></svg>
<div class="abs" style="left:13.6px;top:8.6px;font-size:9.600px;line-height:12px;letter-spacing:-0.17px;white-space:nowrap;color:#111;text-shadow:0 0 .2px #555">Enterprise Architecture Diagrams</div>
<svg class="abs" style="left:4.500px;top:11.0px" width="7" height="7" viewBox="0 0 7 7"><path d="M.8.300l5.400 3.200-5.400 3.200z" fill="#8a8a8a"/></svg>
<div class="abs" style="left:13.6px;top:24.2px;font-size:9.600px;line-height:12px;letter-spacing:-0.27px;white-space:nowrap;color:#111;text-shadow:0 0 .2px #555">Entity-Relationship Diagram (ERD)</div>
<svg class="abs" style="left:4.500px;top:26.6px" width="7" height="7" viewBox="0 0 7 7"><path d="M.8.300l5.400 3.200-5.400 3.200z" fill="#8a8a8a"/></svg>
<div class="abs" style="left:13.6px;top:39.8px;font-size:9.600px;line-height:12px;letter-spacing:-0.27px;white-space:nowrap;color:#111;text-shadow:0 0 .2px #555">Event-Driven Process Chain Diagrams</div>
<svg class="abs" style="left:4.500px;top:42.7px" width="7" height="7" viewBox="0 0 7 7"><path d="M.300.800h6.400l-3.200 5.400z" fill="#8a8a8a"/></svg>
<div class="abs" style="left:26.4px;top:55.2px;font-size:9.600px;line-height:12px;letter-spacing:-0.47px;white-space:nowrap;color:#111;text-shadow:0 0 .2px #555">EPC diagrams</div>
<div class="abs" style="left:13.6px;top:71.2px;font-size:9.600px;line-height:12px;letter-spacing:-0.26px;white-space:nowrap;color:#111;text-shadow:0 0 .2px #555">Fault Tree Analysis Diagrams</div>
<svg class="abs" style="left:4.500px;top:73.6px" width="7" height="7" viewBox="0 0 7 7"><path d="M.8.300l5.400 3.200-5.400 3.200z" fill="#8a8a8a"/></svg>
<div class="abs" style="left:13.6px;top:86.6px;font-size:9.600px;line-height:12px;letter-spacing:-0.32px;white-space:nowrap;color:#111;text-shadow:0 0 .2px #555">Fire and Emergency Plans</div>
<svg class="abs" style="left:4.500px;top:89.0px" width="7" height="7" viewBox="0 0 7 7"><path d="M.8.300l5.400 3.200-5.400 3.200z" fill="#8a8a8a"/></svg>
<div class="abs" style="left:13.6px;top:102.2px;font-size:9.600px;line-height:12px;letter-spacing:-0.31px;white-space:nowrap;color:#111;text-shadow:0 0 .2px #555">Fishbone Diagrams</div>
<svg class="abs" style="left:4.500px;top:104.6px" width="7" height="7" viewBox="0 0 7 7"><path d="M.8.300l5.400 3.200-5.400 3.200z" fill="#8a8a8a"/></svg>
<div class="abs" style="left:13.6px;top:117.8px;font-size:9.600px;line-height:12px;letter-spacing:-0.33px;white-space:nowrap;color:#111;text-shadow:0 0 .2px #555">Floor Plans</div>
<svg class="abs" style="left:4.500px;top:120.2px" width="7" height="7" viewBox="0 0 7 7"><path d="M.8.300l5.400 3.200-5.400 3.200z" fill="#8a8a8a"/></svg>
</div>
<div class="abs" style="left:0;top:162.400px;width:180px;height:18px;background:#b3b3b3"></div>
<div class="abs" style="left:13px;top:165.600px;width:150.500px;height:12px;background:#fff;border-radius:3px"></div>
<svg class="abs" style="left:19px;top:167px" width="8" height="9" viewBox="0 0 8 9"><rect x="0" y="0" width="2.800" height="2.200" fill="#3fa9f0"/><rect x="0" y="2.800" width="2.800" height="5" fill="#e8391c"/><rect x="3.500" y="0" width="4.500" height="5.300" fill="#6cc644"/><rect x="3.500" y="6" width="4.500" height="2.200" fill="#0b0b0b"/><rect x="0" y="8" width="3" height="1" fill="#222"/></svg>
<div class="abs" style="left:32px;top:166px;font-size:9.500px;line-height:12px;letter-spacing:-.31px;white-space:nowrap;color:#222">Find More Shapes</div>
<div class="abs" style="left:0;top:180.400px;width:180px;height:13.800px;background:linear-gradient(#b5dbfb 0,#9bcdf6 45%,#7ab9ee 85%,#d8ecfb 100%)"></div>
<div class="abs" style="left:17px;top:180.600px;font-size:10.500px;line-height:13px;letter-spacing:-.55px;white-space:nowrap;color:#111;text-shadow:0 0 .2px #555">EPC diagrams</div>
<svg class="abs" style="left:165px;top:183px" width="10" height="10" viewBox="0 0 10 10"><circle cx="4.600" cy="4.600" r="4.200" fill="#7d7d7d"/><path d="M2.800 2.800l3.600 3.600M6.400 2.800l-3.600 3.600" stroke="#e8e8e8" stroke-width="1.100"/></svg>
<div class="abs" style="left:0;top:194.200px;width:180px;height:271px;background:#cfdbe6;overflow:hidden">
<div class="abs" style="left:8.600px;top:1.5px;width:28.600px;height:27.500px;background:#a9c9f2;border-radius:2px"></div>
<div class="abs" style="left:10.700px;top:3.4px;width:24.200px;height:23.600px;background:linear-gradient(#ffffff 0,#f2f2f2 40%,#cfcfcf 100%);border:1px solid #7c7c7c;border-right-color:#666;border-bottom-color:#666;box-shadow:inset 1.500px 1.500px 0 rgba(255,255,255,.9)"></div>
<div class="abs" style="left:43.500px;top:4.3px;font-size:8.500px;line-height:11px;white-space:nowrap;text-shadow:0 0 .3px rgba(0,0,0,.6);color:#1c3c94">Event</div>
<div class="abs" style="left:10.700px;top:31.5px;width:24.200px;height:23.600px;background:linear-gradient(#ffffff 0,#f2f2f2 40%,#cfcfcf 100%);border:1px solid #7c7c7c;border-right-color:#666;border-bottom-color:#666;box-shadow:inset 1.500px 1.500px 0 rgba(255,255,255,.9)"></div>
<div class="abs" style="left:43.500px;top:32.5px;font-size:8.500px;line-height:11px;white-space:nowrap;text-shadow:0 0 .3px rgba(0,0,0,.6);color:#111">Function</div>
<div class="abs" style="left:10.700px;top:59.6px;width:24.200px;height:23.600px;background:linear-gradient(#ffffff 0,#f2f2f2 40%,#cfcfcf 100%);border:1px solid #7c7c7c;border-right-color:#666;border-bottom-color:#666;box-shadow:inset 1.500px 1.500px 0 rgba(255,255,255,.9)"></div>
<div class="abs" style="left:43.500px;top:60.5px;font-size:8.500px;line-height:11px;white-space:nowrap;text-shadow:0 0 .3px rgba(0,0,0,.6);color:#111">Process path</div>
<div class="abs" style="left:10.700px;top:87.6px;width:24.200px;height:23.600px;background:linear-gradient(135deg,#f2f6fc 0,#dfe9f6 45%,#b4c8e4 100%);border:1px solid #5c78a6;border-right-color:#4a6698;border-bottom-color:#4a6698;box-shadow:inset 1.500px 1.500px 0 rgba(255,255,255,.9)"></div>
<div class="abs" style="left:43.500px;top:88.6px;font-size:8.500px;line-height:11px;white-space:nowrap;text-shadow:0 0 .3px rgba(0,0,0,.6);color:#111">AND operator</div>
<div class="abs" style="left:10.700px;top:115.7px;width:24.200px;height:23.600px;background:linear-gradient(135deg,#f2f6fc 0,#dfe9f6 45%,#b4c8e4 100%);border:1px solid #5c78a6;border-right-color:#4a6698;border-bottom-color:#4a6698;box-shadow:inset 1.500px 1.500px 0 rgba(255,255,255,.9)"></div>
<div class="abs" style="left:43.500px;top:116.7px;font-size:8.500px;line-height:11px;white-space:nowrap;text-shadow:0 0 .3px rgba(0,0,0,.6);color:#111">OR operator</div>
<div class="abs" style="left:10.700px;top:143.8px;width:24.200px;height:23.600px;background:linear-gradient(135deg,#f2f6fc 0,#dfe9f6 45%,#b4c8e4 100%);border:1px solid #5c78a6;border-right-color:#4a6698;border-bottom-color:#4a6698;box-shadow:inset 1.500px 1.500px 0 rgba(255,255,255,.9)"></div>
<div class="abs" style="left:43.500px;top:144.8px;font-size:8.500px;line-height:11px;white-space:nowrap;text-shadow:0 0 .3px rgba(0,0,0,.6);color:#111">XOR operator</div>
<div class="abs" style="left:10.700px;top:171.9px;width:24.200px;height:23.600px;background:linear-gradient(#ffffff 0,#f2f2f2 40%,#cfcfcf 100%);border:1px solid #7c7c7c;border-right-color:#666;border-bottom-color:#666;box-shadow:inset 1.500px 1.500px 0 rgba(255,255,255,.9)"></div>
<div class="abs" style="left:43.500px;top:173.0px;font-size:8.500px;line-height:11px;white-space:nowrap;text-shadow:0 0 .3px rgba(0,0,0,.6);color:#111">Organization unit</div>
<div class="abs" style="left:10.700px;top:200.0px;width:24.200px;height:23.600px;background:linear-gradient(#ffffff 0,#f2f2f2 40%,#cfcfcf 100%);border:1px solid #7c7c7c;border-right-color:#666;border-bottom-color:#666;box-shadow:inset 1.500px 1.500px 0 rgba(255,255,255,.9)"></div>
<div class="abs" style="left:43.500px;top:201.1px;font-size:8.500px;line-height:11px;white-space:nowrap;text-shadow:0 0 .3px rgba(0,0,0,.6);color:#111">Information/ material object</div>
<div class="abs" style="left:10.700px;top:228.0px;width:24.200px;height:23.600px;background:linear-gradient(#ffffff 0,#f2f2f2 40%,#cfcfcf 100%);border:1px solid #7c7c7c;border-right-color:#666;border-bottom-color:#666;box-shadow:inset 1.500px 1.500px 0 rgba(255,255,255,.9)"></div>
<div class="abs" style="left:43.500px;top:229.2px;font-size:8.500px;line-height:11px;white-space:nowrap;text-shadow:0 0 .3px rgba(0,0,0,.6);color:#111">System</div>
<div class="abs" style="left:10.700px;top:256.1px;width:24.200px;height:23.600px;background:linear-gradient(#ffffff 0,#f2f2f2 40%,#cfcfcf 100%);border:1px solid #7c7c7c;border-right-color:#666;border-bottom-color:#666;box-shadow:inset 1.500px 1.500px 0 rgba(255,255,255,.9)"></div>
<div class="abs" style="left:43.500px;top:257.2px;font-size:8.500px;line-height:11px;white-space:nowrap;text-shadow:0 0 .3px rgba(0,0,0,.6);color:#111">Information</div>
<svg class="abs" style="left:0;top:0" width="60" height="271" viewBox="0 287.2 60 271">
<path d="M13.500 301.300l4.200-6.500h10.300l4.200 6.500-4.200 6.500h-10.300z" fill="#6aadba" stroke="#4d8c9a" stroke-width=".8"/><circle cx="17" cy="294.800" r="1" fill="#ff8a1a"/>
<rect x="14.200" y="323.300" width="17.200" height="13.300" rx="2.200" fill="#f8b27c" stroke="#e6925c" stroke-width=".8"/><circle cx="17" cy="323.600" r="1" fill="#ff8a1a"/>
<path d="M16.500 354h12.500l3 5.500-3 5.500h-10z" fill="#8fd87a" stroke="#4aa04a" stroke-width=".8"/><rect x="13.800" y="350.800" width="14.200" height="10.400" fill="#9be088" stroke="#4aa04a" stroke-width=".8"/>
<g fill="#d6d6d6" stroke="#777" stroke-width=".8"><circle cx="22.600" cy="386.800" r="7"/><circle cx="22.600" cy="414.900" r="7"/><circle cx="22.600" cy="443" r="7"/></g>
<g font-family="Liberation Sans,sans-serif" font-size="5.200" fill="#444" text-anchor="middle" font-weight="bold"><text x="22.600" y="388.700">AND</text><text x="22.600" y="416.800">OR</text><text x="22.600" y="444.900">XOR</text></g>
<ellipse cx="22.900" cy="470.600" rx="8.600" ry="6" fill="#f19b9b" stroke="#c76a6a" stroke-width=".8"/><path d="M17.400 465.800v9.600" stroke="#c76a6a" stroke-width=".8"/>
<rect x="14.300" y="493.100" width="16" height="11" fill="#fde9a2" stroke="#bfa86a" stroke-width=".8"/>
<rect x="14.300" y="521.800" width="17.200" height="10.200" fill="#79a9ea" stroke="#4a78b8" stroke-width=".8"/><path d="M17.300 521.800v10.200M28.500 521.800v10.200" stroke="#4a78b8" stroke-width=".7"/>
<rect x="15" y="549.300" width="14.700" height="10" fill="#d2e9fb" stroke="#6a8ab0" stroke-width=".8"/>
</svg>
</div>
 <!--LEFTEND-->
 </div>
 <div id="hscroll">
<svg class="abs" style="left:0;top:-1px" width="820" height="13" viewBox="180 545 820 13">
<defs><linearGradient id="ghs" x1="0" y1="0" x2="1" y2="0"><stop offset="0" stop-color="#8f8f8f"/><stop offset="1" stop-color="#c9c9c9"/></linearGradient></defs>
<rect x="180" y="545.600" width="820" height="12.400" fill="#fafafa"/>
<path d="M180 545.800h806" stroke="#c6c6c6" stroke-width=".6"/>
<rect x="181" y="546.500" width="13.500" height="10.800" fill="#f3f3f3" stroke="#c4c4c4" stroke-width=".7"/><path d="M186.400 549v5.800M188.800 549v5.800" stroke="#9a9a9a" stroke-width="1"/>
<rect x="195.600" y="546.500" width="34.500" height="10.800" fill="#f6f6f6" stroke="#d0d0d0" stroke-width=".7"/><path d="M212.800 546.800v10.200" stroke="#dcdcdc" stroke-width=".7"/>
<path d="M205.500 549.300v5l-4.500-2.500z" fill="#c4c4c4"/><path d="M220.300 549.300v5l4.500-2.500z" fill="#c4c4c4"/>
<rect x="230.600" y="546.500" width="73.400" height="10.800" fill="#fbfbfb" stroke="#d4d4d4" stroke-width=".7"/>
<path d="M295.600 550.800l2.400-2.600 2.400 2.600M295.600 553l2.400 2.600 2.400-2.600" fill="none" stroke="#333" stroke-width="1"/>
<rect x="304.300" y="546.300" width="34" height="11.200" fill="url(#ghs)"/>
<g fill="#f1f1f1" stroke="#8a8a8a" stroke-width=".6"><rect x="310.400" y="548" width="6.400" height="8"/><rect x="319" y="548" width="6.400" height="8"/><rect x="327.600" y="548" width="6.400" height="8"/></g>
<rect x="977.300" y="547" width="10.600" height="9.800" fill="#d9d9d9"/><rect x="989" y="547" width="10" height="9.800" fill="#d9d9d9"/>
<g fill="#2a62c8"><rect x="978" y="547.500" width="1.800" height="1.800"/><rect x="981.700" y="547.500" width="1.800" height="1.800"/><rect x="985.500" y="547.500" width="1.800" height="1.800"/><rect x="978" y="551" width="1.800" height="1.800"/><rect x="985.500" y="551" width="1.800" height="1.800"/><rect x="978" y="554.500" width="1.800" height="1.800"/><rect x="981.700" y="554.500" width="1.800" height="1.800"/><rect x="985.500" y="554.500" width="1.800" height="1.800"/></g>
<rect x="980.300" y="549.700" width="4.600" height="4.400" fill="#cfe4fa" stroke="#8ab8f0" stroke-width=".6"/>
<rect x="992" y="548.600" width="4" height="6.600" rx="1" fill="#fff" stroke="#a8c8ea" stroke-width=".8"/><g fill="#2a62c8"><rect x="989.500" y="547.500" width="1.500" height="1.500"/><rect x="997" y="547.500" width="1.500" height="1.500"/><rect x="989.500" y="554.800" width="1.500" height="1.500"/><rect x="997" y="554.800" width="1.500" height="1.500"/></g>
</svg>
<div class="abs" style="left:54px;top:1.600px;font-size:8.500px;line-height:10px;letter-spacing:-.16px;white-space:nowrap;color:#222">Custom 60%</div>
 <!--HSCROLLEND-->
 </div>
 <div id="status">
  <span style="left:7.600px;letter-spacing:-.5px">Ready</span>
  <span style="left:169px">W: 33.54,&nbsp; H: 33.54,&nbsp; Angle: 0.00 rad</span>
  <span style="left:424px;letter-spacing:.22px">M: [ 257.75, 80.64 ]</span>
 </div>
 <!--INSPECTOR-->
<div class="abs" style="left:812.300px;top:51.300px;width:188px;height:282px;background:#ebebeb;box-shadow:-1px 1px 4px rgba(0,0,0,.28)"></div>
<div class="abs" style="left:986px;top:333px;width:14px;height:195px;background:#f4f4f4"></div>
<div class="abs" style="left:812.300px;top:51.300px;width:188px;height:12.300px;background:linear-gradient(#eeeeee,#dedede);border-bottom:1px solid #bdbdbd;border-radius:0 0 0 4px"></div>
<div class="abs" style="left:812.300px;top:63.600px;width:188px;height:13.200px;background:linear-gradient(#e2e2e2,#d6d6d6);border-bottom:1px solid #bcbcbc;border-radius:0 0 0 4px"></div>
<div class="abs" style="left:812.300px;top:76.800px;width:188px;height:11.800px;background:linear-gradient(#e9e9e9,#e0e0e0)"></div>
<div class="abs" style="left:812.300px;top:88.600px;width:188px;height:28.100px;background:#f5f5f5;border-bottom:1px solid #d4d4d4"></div>
<div class="abs" style="left:812.300px;top:88.600px;width:27.500px;height:27.200px;background:#e8e8e8"></div>
<div class="abs" style="left:842.200px;top:52.55px;font-size:9.400px;line-height:12px;letter-spacing:.1px;white-space:nowrap;color:#111;text-shadow:0 0 .4px #222">Behaviour</div>
<div class="abs" style="left:842.200px;top:65.25px;font-size:9.400px;line-height:12px;letter-spacing:.1px;white-space:nowrap;color:#111;text-shadow:0 0 .4px #222">Layers</div>
<div class="abs" style="left:842.200px;top:77.850px;font-size:9.400px;line-height:12px;letter-spacing:.1px;white-space:nowrap;color:#111;text-shadow:0 0 .4px #222">Line</div>
<svg class="abs" style="left:812px;top:51px" width="188" height="95" viewBox="812 69 188 95">
<circle cx="820.900" cy="76" r="4" fill="#e4e4e4" stroke="#dadada" stroke-width=".5"/>
<path d="M834.800 72.700l5.600 3.400-5.600 3.400z" fill="#757575"/><path d="M834.800 85.300l5.600 3.400-5.600 3.400z" fill="#757575"/><path d="M834 97.800h6.800l-3.400 6z" fill="#757575"/>
<!-- brush -->
<path d="M820.300 124h14.600" stroke="#2a9de6" stroke-width="2.800"/>
<path d="M834.300 112.200l-6.500 5" stroke="#3a3a3a" stroke-width="1.700" stroke-linecap="round"/><path d="M829.200 116.100l-2.400 1.900" stroke="#e8a060" stroke-width="1.900"/><path d="M826.800 118l-3.200 2.600" stroke="#2a7ad0" stroke-width="2" stroke-linecap="round"/>
<!-- bucket -->
<path d="M845.500 114.500l4.500-3.300 2.800 4-4.500 3.300z" fill="#8a8a8a" stroke="#555" stroke-width=".7"/><path d="M846 113.500a3 2 -36 0 1 4.300-3" fill="none" stroke="#666" stroke-width=".8"/>
<path d="M850.500 113.500c3 0 3.200 1.500 3.200 4v6h-2.200v-6c0-1.500-.5-2-1.500-2z" fill="#1f8fe0"/>
<ellipse cx="852.900" cy="123.700" rx="6.600" ry="2.500" fill="#1f8fe0"/>
<!-- shadow square -->
<rect x="871.600" y="114" width="10.300" height="9" rx="1" fill="#6aa8f0" opacity=".55"/>
<defs><linearGradient id="gsq" x1="0" y1="0" x2="0" y2="1"><stop offset="0" stop-color="#8f8f8f"/><stop offset="1" stop-color="#e6e6e6"/></linearGradient></defs>
<rect x="871" y="113.200" width="10" height="8.500" rx=".8" fill="url(#gsq)" stroke="#7a7a7a" stroke-width=".7"/>
<text x="896.600" y="124.800" font-family="Liberation Serif,serif" font-weight="bold" font-size="16.500" fill="#2a5aa8">A</text>
<!-- stroke row -->
<rect x="820.400" y="143.200" width="9.200" height="9.200" rx="1.500" fill="#fff" stroke="#b5b5b5" stroke-width=".7"/><path d="M822.500 147.800l2 2.300 3.300-5" fill="none" stroke="#222" stroke-width="1.100"/>
<rect x="875" y="140.300" width="37.400" height="15" fill="#b4b4b4" stroke="#a2a2a2" stroke-width=".6"/><rect x="879.600" y="144.300" width="28.600" height="7.200" fill="#fff" stroke="#444" stroke-width=".9"/>
</svg>
<div class="abs" style="left:833.600px;top:123.700px;font-size:9px;line-height:12px;font-weight:bold;letter-spacing:0;white-space:nowrap;color:#111">Stroke</div>
<div class="abs" style="left:990px;top:307px;width:10px;height:12px;background:linear-gradient(#f0f0f0 0,#f0f0f0 1px,#dcdcdc 2px,#e4e4e4);border-radius:0 0 0 3px"></div>
<div class="abs" style="left:990px;top:319px;width:10px;height:12.500px;background:linear-gradient(#f2f2f2 0,#f2f2f2 1px,#d9d9d9 2px,#e2e2e2)"></div>
<div class="abs" style="left:990px;top:331.500px;width:10px;height:2px;background:linear-gradient(#f4f4f4,#dcdcdc)"></div>
<div class="abs" style="left:990px;top:166.600px;width:1.800px;height:10.600px;background:#4a90e0"></div>
<div class="abs" style="left:990px;top:246.400px;width:1.800px;height:10.600px;background:#5a98e0"></div>
<div class="abs" style="left:990px;top:264.700px;width:1.800px;height:10.300px;background:#5a98e0"></div>
 <!--INSPECTOREND-->
<div class="abs" style="left:812.400px;top:144px;width:178.400px;height:305.200px;background:#ececec;border-radius:4.500px;box-shadow:0 0 0 .6px #b8b8b8,0 4px 12px rgba(0,0,0,.38),0 0 5px rgba(0,0,0,.25);overflow:hidden">
<div class="abs" style="left:0;top:0;width:179px;height:39px;background:#f5f6f6;border-bottom:1px solid #d6d6d6"></div>
<div class="abs" style="left:128.200px;top:12px;width:24.300px;height:27px;background:#e3e3e3;border-radius:3px 3px 0 0"></div>
<div class="abs" style="left:7.7px;top:16.3px;width:15.400px;height:15.400px;border-radius:50%;background:radial-gradient(circle,rgba(255,255,255,.95) 0,rgba(255,255,255,.35) 45%,rgba(255,255,255,0) 75%),conic-gradient(from 0deg,#b4e43a,#f6e23c 40deg,#f65a32 95deg,#f03cb4 150deg,#7a4cf0 200deg,#3a8cf2 235deg,#2ecbe8 270deg,#2edc9a 305deg,#4fd944 335deg,#b4e43a)"></div>
<div class="abs" style="left:0;top:267.200px;width:179px;height:1px;background:#d2d2d2"></div>
<div class="abs" style="left:76px;top:.800px;font-size:9px;line-height:11px;white-space:nowrap;color:#a9a9a9;letter-spacing:-.05px">Colors</div>
<div class="abs" style="left:3.600px;top:86.400px;width:170.400px;height:136.800px;background:#fff;border:1px solid #d0d0d0"></div>
<svg class="abs" style="left:0;top:0" width="179" height="306" viewBox="812.400 162 179 306">
<rect x="817.7" y="251.4" width="14.900" height="15.100" fill="#ffffff" stroke="#8a8a8a" stroke-width=".7"/>
<rect x="836.5" y="251.4" width="14.900" height="15.100" fill="#e1e1e1" stroke="#8a8a8a" stroke-width=".7"/>
<rect x="855.2" y="251.4" width="14.900" height="15.100" fill="#d1d1d1" stroke="#8a8a8a" stroke-width=".7"/>
<rect x="874.0" y="251.4" width="14.900" height="15.100" fill="#c0c0c0" stroke="#8a8a8a" stroke-width=".7"/>
<rect x="892.7" y="251.4" width="14.900" height="15.100" fill="#a1a1a1" stroke="#8a8a8a" stroke-width=".7"/>
<rect x="911.5" y="251.4" width="14.900" height="15.100" fill="#818181" stroke="#8a8a8a" stroke-width=".7"/>
<rect x="930.3" y="251.4" width="14.900" height="15.100" fill="#555555" stroke="#8a8a8a" stroke-width=".7"/>
<rect x="949.0" y="251.4" width="14.900" height="15.100" fill="#333333" stroke="#8a8a8a" stroke-width=".7"/>
<rect x="967.8" y="251.4" width="14.900" height="15.100" fill="#06060a" stroke="#8a8a8a" stroke-width=".7"/>
<rect x="817.7" y="270.6" width="14.900" height="15.100" fill="#ffaaaa" stroke="#8a8a8a" stroke-width=".7"/>
<rect x="836.5" y="270.6" width="14.900" height="15.100" fill="#ffd1a8" stroke="#8a8a8a" stroke-width=".7"/>
<rect x="855.2" y="270.6" width="14.900" height="15.100" fill="#ffe5a8" stroke="#8a8a8a" stroke-width=".7"/>
<rect x="874.0" y="270.6" width="14.900" height="15.100" fill="#fbf6a9" stroke="#8a8a8a" stroke-width=".7"/>
<rect x="892.7" y="270.6" width="14.900" height="15.100" fill="#faf6a6" stroke="#8a8a8a" stroke-width=".7"/>
<rect x="911.5" y="270.6" width="14.900" height="15.100" fill="#bdfaa6" stroke="#8a8a8a" stroke-width=".7"/>
<rect x="930.3" y="270.6" width="14.900" height="15.100" fill="#8ee09b" stroke="#8a8a8a" stroke-width=".7"/>
<rect x="949.0" y="270.6" width="14.900" height="15.100" fill="#a9f646" stroke="#8a8a8a" stroke-width=".7"/>
<rect x="967.8" y="270.6" width="14.900" height="15.100" fill="#a9fbe1" stroke="#8a8a8a" stroke-width=".7"/>
<rect x="817.7" y="289.9" width="14.900" height="15.100" fill="#fe2a17" stroke="#8a8a8a" stroke-width=".7"/>
<rect x="836.5" y="289.9" width="14.900" height="15.100" fill="#fe8b1f" stroke="#8a8a8a" stroke-width=".7"/>
<rect x="855.2" y="289.9" width="14.900" height="15.100" fill="#f9b92f" stroke="#8a8a8a" stroke-width=".7"/>
<rect x="874.0" y="289.9" width="14.900" height="15.100" fill="#ffe92f" stroke="#8a8a8a" stroke-width=".7"/>
<rect x="892.7" y="289.9" width="14.900" height="15.100" fill="#dee92f" stroke="#8a8a8a" stroke-width=".7"/>
<rect x="911.5" y="289.9" width="14.900" height="15.100" fill="#60d83f" stroke="#8a8a8a" stroke-width=".7"/>
<rect x="930.3" y="289.9" width="14.900" height="15.100" fill="#20b03f" stroke="#8a8a8a" stroke-width=".7"/>
<rect x="949.0" y="289.9" width="14.900" height="15.100" fill="#30d878" stroke="#8a8a8a" stroke-width=".7"/>
<rect x="967.8" y="289.9" width="14.900" height="15.100" fill="#30d8b1" stroke="#8a8a8a" stroke-width=".7"/>
<rect x="817.7" y="309.1" width="14.900" height="15.100" fill="#c02010" stroke="#8a8a8a" stroke-width=".7"/>
<rect x="836.5" y="309.1" width="14.900" height="15.100" fill="#c14817" stroke="#8a8a8a" stroke-width=".7"/>
<rect x="855.2" y="309.1" width="14.900" height="15.100" fill="#c17820" stroke="#8a8a8a" stroke-width=".7"/>
<rect x="874.0" y="309.1" width="14.900" height="15.100" fill="#c99b20" stroke="#8a8a8a" stroke-width=".7"/>
<rect x="892.7" y="309.1" width="14.900" height="15.100" fill="#a9b920" stroke="#8a8a8a" stroke-width=".7"/>
<rect x="911.5" y="309.1" width="14.900" height="15.100" fill="#178028" stroke="#8a8a8a" stroke-width=".7"/>
<rect x="930.3" y="309.1" width="14.900" height="15.100" fill="#006410" stroke="#8a8a8a" stroke-width=".7"/>
<rect x="949.0" y="309.1" width="14.900" height="15.100" fill="#178028" stroke="#8a8a8a" stroke-width=".7"/>
<rect x="967.8" y="309.1" width="14.900" height="15.100" fill="#008161" stroke="#8a8a8a" stroke-width=".7"/>
<rect x="817.7" y="328.4" width="14.900" height="15.100" fill="#c1f9fa" stroke="#8a8a8a" stroke-width=".7"/>
<rect x="836.5" y="328.4" width="14.900" height="15.100" fill="#a1d9f1" stroke="#8a8a8a" stroke-width=".7"/>
<rect x="855.2" y="328.4" width="14.900" height="15.100" fill="#b9c9e9" stroke="#8a8a8a" stroke-width=".7"/>
<rect x="874.0" y="328.4" width="14.900" height="15.100" fill="#90a9d9" stroke="#8a8a8a" stroke-width=".7"/>
<rect x="892.7" y="328.4" width="14.900" height="15.100" fill="#e9b1f9" stroke="#8a8a8a" stroke-width=".7"/>
<rect x="911.5" y="328.4" width="14.900" height="15.100" fill="#ffa9d1" stroke="#8a8a8a" stroke-width=".7"/>
<rect x="930.3" y="328.4" width="14.900" height="15.100" fill="#f9e1d1" stroke="#8a8a8a" stroke-width=".7"/>
<rect x="949.0" y="328.4" width="14.900" height="15.100" fill="#d9b181" stroke="#8a8a8a" stroke-width=".7"/>
<rect x="967.8" y="328.4" width="14.900" height="15.100" fill="#d9c1a1" stroke="#8a8a8a" stroke-width=".7"/>
<rect x="817.7" y="347.6" width="14.900" height="15.100" fill="#20e1e1" stroke="#8a8a8a" stroke-width=".7"/>
<rect x="836.5" y="347.6" width="14.900" height="15.100" fill="#28a9e1" stroke="#8a8a8a" stroke-width=".7"/>
<rect x="855.2" y="347.6" width="14.900" height="15.100" fill="#2860d9" stroke="#8a8a8a" stroke-width=".7"/>
<rect x="874.0" y="347.6" width="14.900" height="15.100" fill="#401888" stroke="#8a8a8a" stroke-width=".7"/>
<rect x="892.7" y="347.6" width="14.900" height="15.100" fill="#a940c1" stroke="#8a8a8a" stroke-width=".7"/>
<rect x="911.5" y="347.6" width="14.900" height="15.100" fill="#e93890" stroke="#8a8a8a" stroke-width=".7"/>
<rect x="930.3" y="347.6" width="14.900" height="15.100" fill="#d19070" stroke="#8a8a8a" stroke-width=".7"/>
<rect x="949.0" y="347.6" width="14.900" height="15.100" fill="#a07040" stroke="#8a8a8a" stroke-width=".7"/>
<rect x="967.8" y="347.6" width="14.900" height="15.100" fill="#988878" stroke="#8a8a8a" stroke-width=".7"/>
<rect x="817.7" y="366.9" width="14.900" height="15.100" fill="#087878" stroke="#8a8a8a" stroke-width=".7"/>
<rect x="836.5" y="366.9" width="14.900" height="15.100" fill="#175870" stroke="#8a8a8a" stroke-width=".7"/>
<rect x="855.2" y="366.9" width="14.900" height="15.100" fill="#082880" stroke="#8a8a8a" stroke-width=".7"/>
<rect x="874.0" y="366.9" width="14.900" height="15.100" fill="#081058" stroke="#8a8a8a" stroke-width=".7"/>
<rect x="892.7" y="366.9" width="14.900" height="15.100" fill="#602068" stroke="#8a8a8a" stroke-width=".7"/>
<rect x="911.5" y="366.9" width="14.900" height="15.100" fill="#781840" stroke="#8a8a8a" stroke-width=".7"/>
<rect x="930.3" y="366.9" width="14.900" height="15.100" fill="#785038" stroke="#8a8a8a" stroke-width=".7"/>
<rect x="949.0" y="366.9" width="14.900" height="15.100" fill="#684018" stroke="#8a8a8a" stroke-width=".7"/>
<rect x="967.8" y="366.9" width="14.900" height="15.100" fill="#503830" stroke="#8a8a8a" stroke-width=".7"/>
<rect x="816.500" y="250.200" width="17.300" height="17.600" fill="none" stroke="#9cc6f2" stroke-width="1.500"/>
<g fill="#dddddd"><circle cx="821.500" cy="168" r="4.400"/><circle cx="835.500" cy="168" r="4.400"/><circle cx="849.500" cy="168" r="4.400"/></g>

<rect x="844" y="180" width="18" height="3" rx="1" fill="#f03030"/><rect x="851" y="180" width="11" height="3" rx="1" fill="#f59090"/><rect x="844" y="184.800" width="18" height="3" rx="1" fill="#30b040"/><rect x="854" y="184.800" width="8" height="3" rx="1" fill="#90d898"/><rect x="844" y="189.400" width="18" height="3.200" rx="1.500" fill="#4050f0"/><rect x="856" y="189.400" width="6" height="3.200" rx="1.500" fill="#98a8f0"/>
<g fill="#fff" stroke="#bbb" stroke-width=".3"><circle cx="850.600" cy="182" r="1.600"/><circle cx="853.200" cy="186.800" r="1.600"/><circle cx="855.600" cy="191.800" r="1.600"/></g>
<rect x="874.500" y="182.500" width="11" height="11.700" rx="1" fill="#fbfbfb" stroke="#cfcfcf" stroke-width=".6"/><rect x="881" y="185" width="3" height="3" rx=".6" fill="#9a9a9a"/><rect x="876.500" y="189.500" width="3.200" height="3" rx=".6" fill="#111"/><rect x="881" y="189.500" width="3.200" height="3" rx=".6" fill="#222"/>
<rect x="869.500" y="178.500" width="12" height="11.500" rx="1" fill="#fdfdfd" stroke="#cfcfcf" stroke-width=".6"/><rect x="871.500" y="180.300" width="3.200" height="3.200" rx=".7" fill="#f02828"/><rect x="876.200" y="180.300" width="3.200" height="3.200" rx=".7" fill="#30b840"/><rect x="871.500" y="184.900" width="3.200" height="3.200" rx=".7" fill="#f8b020"/><rect x="876.200" y="184.900" width="3.200" height="3.200" rx=".7" fill="#3858f0"/>
<defs><linearGradient id="gsky" x1="0" y1="0" x2="0" y2="1"><stop offset="0" stop-color="#c98bbd"/><stop offset=".45" stop-color="#f0a078"/><stop offset=".62" stop-color="#f7b88a"/><stop offset=".63" stop-color="#5a4a6a"/><stop offset=".8" stop-color="#c088b8"/><stop offset="1" stop-color="#d8a0c8"/></linearGradient></defs>
<rect x="893.400" y="178.600" width="19" height="16" rx=".8" fill="#fdfdfd" stroke="#d4d4d4" stroke-width=".6"/><rect x="895" y="180.300" width="15.800" height="12.700" fill="url(#gsky)"/><path d="M895 188.600l4.500-3.300 2.500 1.700 2.500-1.200 3 1.600 3.300-.8v2.400h-15.800z" fill="#1c1c28"/>
<rect x="920.500" y="188.500" width="15" height="6" rx=".8" fill="#f0f0f0" stroke="#cfcfcf" stroke-width=".6"/>
<path d="M921.0 189v-7.500l1.100-2.700 1.100 2.700v7.500z" fill="#e02020"/>
<path d="M923.4 189v-7.500l1.100-2.700 1.100 2.700v7.500z" fill="#f8e020"/>
<path d="M925.8 189v-7.500l1.100-2.700 1.100 2.700v7.500z" fill="#30b030"/>
<path d="M928.2 189v-7.500l1.100-2.700 1.100 2.700v7.500z" fill="#20b0e8"/>
<path d="M930.6 189v-7.500l1.100-2.700 1.100 2.700v7.500z" fill="#2040c0"/>
<path d="M933.0 189v-7.500l1.100-2.700 1.100 2.700v7.500z" fill="#e040e0"/>
<rect x="944.900" y="178.200" width="15.300" height="15.300" rx="1" fill="#fbfbfb" stroke="#8a8a8a" stroke-width="1"/>
<circle cx="947.5" cy="181.0" r="1.250" fill="#f06a6a"/>
<circle cx="950.9" cy="181.0" r="1.250" fill="#f8d088"/>
<circle cx="954.3" cy="181.0" r="1.250" fill="#a8e098"/>
<circle cx="957.7" cy="181.0" r="1.250" fill="#78b8f0"/>
<circle cx="947.5" cy="184.3" r="1.250" fill="#f02020"/>
<circle cx="950.9" cy="184.3" r="1.250" fill="#f8a818"/>
<circle cx="954.3" cy="184.3" r="1.250" fill="#30b840"/>
<circle cx="957.7" cy="184.3" r="1.250" fill="#2060e0"/>
<circle cx="947.5" cy="187.6" r="1.250" fill="#901818"/>
<circle cx="950.9" cy="187.6" r="1.250" fill="#a87018"/>
<circle cx="954.3" cy="187.6" r="1.250" fill="#107828"/>
<circle cx="957.7" cy="187.6" r="1.250" fill="#102890"/>
<circle cx="947.5" cy="190.9" r="1.250" fill="#111"/>
<circle cx="950.9" cy="190.9" r="1.250" fill="#555"/>
<circle cx="954.3" cy="190.9" r="1.250" fill="#aaa"/>
<circle cx="957.7" cy="190.9" r="1.250" fill="#eee"/>
<rect x="820.900" y="437.400" width="19.500" height="19.800" rx="3" fill="#fff"/>
<path d="M847.500 452.800l1-2.200 6.300-6.300 1.500 1.500-6.300 6.300z" fill="#e4e4e4" stroke="#6a6a6a" stroke-width=".8"/><path d="M853.800 443.800l1.800-1.800a1.700 1.700 0 0 1 2.500 2.500l-1.800 1.800 .6.600-1 1-3.300-3.300 1-1z" fill="#666"/>
<rect x="865.8" y="437.2" width="9" height="9.300" rx="1.500" fill="#ededed" stroke="#dadada" stroke-width=".7"/>
<rect x="876.7" y="437.2" width="9" height="9.300" rx="1.500" fill="#ededed" stroke="#dadada" stroke-width=".7"/>
<rect x="887.7" y="437.2" width="9" height="9.300" rx="1.500" fill="#ededed" stroke="#dadada" stroke-width=".7"/>
<rect x="898.6" y="437.2" width="9" height="9.300" rx="1.500" fill="#ededed" stroke="#dadada" stroke-width=".7"/>
<rect x="909.5" y="437.2" width="9" height="9.300" rx="1.500" fill="#ededed" stroke="#dadada" stroke-width=".7"/>
<rect x="920.4" y="437.2" width="9" height="9.300" rx="1.500" fill="#ededed" stroke="#dadada" stroke-width=".7"/>
<rect x="931.4" y="437.2" width="9" height="9.300" rx="1.500" fill="#ededed" stroke="#dadada" stroke-width=".7"/>
<rect x="942.3" y="437.2" width="9" height="9.300" rx="1.500" fill="#ededed" stroke="#dadada" stroke-width=".7"/>
<rect x="953.2" y="437.2" width="9" height="9.300" rx="1.500" fill="#ededed" stroke="#dadada" stroke-width=".7"/>
<rect x="964.2" y="437.2" width="9" height="9.300" rx="1.500" fill="#ededed" stroke="#dadada" stroke-width=".7"/>
<rect x="865.8" y="448.3" width="9" height="9.300" rx="1.500" fill="#ededed" stroke="#dadada" stroke-width=".7"/>
<rect x="876.7" y="448.3" width="9" height="9.300" rx="1.500" fill="#ededed" stroke="#dadada" stroke-width=".7"/>
<rect x="887.7" y="448.3" width="9" height="9.300" rx="1.500" fill="#ededed" stroke="#dadada" stroke-width=".7"/>
<rect x="898.6" y="448.3" width="9" height="9.300" rx="1.500" fill="#ededed" stroke="#dadada" stroke-width=".7"/>
<rect x="909.5" y="448.3" width="9" height="9.300" rx="1.500" fill="#ededed" stroke="#dadada" stroke-width=".7"/>
<rect x="920.4" y="448.3" width="9" height="9.300" rx="1.500" fill="#ededed" stroke="#dadada" stroke-width=".7"/>
<rect x="931.4" y="448.3" width="9" height="9.300" rx="1.500" fill="#ededed" stroke="#dadada" stroke-width=".7"/>
<rect x="942.3" y="448.3" width="9" height="9.300" rx="1.500" fill="#ededed" stroke="#dadada" stroke-width=".7"/>
<rect x="953.2" y="448.3" width="9" height="9.300" rx="1.500" fill="#ededed" stroke="#dadada" stroke-width=".7"/>
<rect x="964.2" y="448.3" width="9" height="9.300" rx="1.500" fill="#ededed" stroke="#dadada" stroke-width=".7"/>
<circle cx="901.100" cy="463.800" r=".7" fill="#c4c4c4"/>
</svg>
</div>
 <!--COLORSEND-->
</div>
</body>
</html>
